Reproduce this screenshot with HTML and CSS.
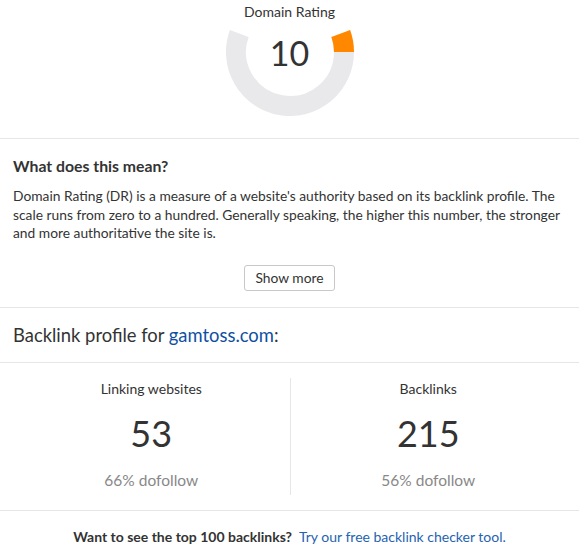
FILE: index.html
```html
<!DOCTYPE html>
<html>
<head>
<meta charset="utf-8">
<link rel="stylesheet" href="styles.css">
</head>
<body>
<section class="rating">
  <div class="rating-label">Domain Rating</div>
  <div class="gauge">
    <svg class="gauge-svg" width="128" height="128" viewBox="0 0 128 128">
      <path d="M13.26 45.53 A54 54 0 1 0 118 64" fill="none" stroke="#e9e9ec" stroke-width="20"/>
      <path d="M118 64 A54 54 0 0 0 114.74 45.53" fill="none" stroke="#ff8800" stroke-width="20"/>
    </svg>
    <div class="gauge-value">10</div>
  </div>
</section>
<section class="meaning">
  <h2 class="meaning-title">What does this mean?</h2>
  <p class="meaning-text">Domain Rating (DR) is a measure of a website's authority based on its backlink profile. The scale runs from zero to a hundred. Generally speaking, the higher this number, the stronger and more authoritative the site is.</p>
  <div class="more-row"><button class="more-btn">Show more</button></div>
</section>
<section class="profile">
  <h2 class="profile-title">Backlink profile for <a class="domain" href="#">gamtoss.com</a>:</h2>
</section>
<section class="stats">
  <div class="stat">
    <div class="stat-label">Linking websites</div>
    <div class="stat-value">53</div>
    <div class="stat-sub">66% dofollow</div>
  </div>
  <div class="stat stat-right">
    <div class="stat-label">Backlinks</div>
    <div class="stat-value">215</div>
    <div class="stat-sub">56% dofollow</div>
  </div>
</section>
<section class="cta">
  <span class="cta-q">Want to see the top 100 backlinks?</span>
  <a class="cta-link" href="#">Try our free backlink checker tool.</a>
</section>
</body>
</html>
```
FILE: styles.css
```css
* { box-sizing: border-box; }
html, body { margin: 0; padding: 0; background: #fff; }
body {
  font-family: Lato, "Liberation Sans", sans-serif;
  color: #333;
  width: 579px;
}
.rating {
  display: flex;
  flex-direction: column;
  align-items: center;
  height: 139px;
  border-bottom: 1px solid #e6e6e6;
}
.rating-label {
  font-size: 14px;
  line-height: 18px;
  margin-top: 3px;
  color: #333;
}
.gauge {
  position: relative;
  width: 128px;
  height: 98px;
  overflow: hidden;
  margin-top: -3px;
}
.gauge-svg {
  position: absolute;
  left: 0;
  top: -30px;
}
.gauge-value {
  position: absolute;
  left: 0;
  right: 0;
  top: 15px;
  text-align: center;
  font-size: 34px;
  line-height: 40px;
  font-weight: 400;
  color: #333;
}
.meaning {
  padding: 17px 13px 16px;
  border-bottom: 1px solid #e6e6e6;
}
.meaning-title {
  margin: 0;
  font-size: 15.8px;
  line-height: 20px;
  font-weight: 700;
  color: #333;
}
.meaning-text {
  margin: 11px 0 0;
  font-size: 13.8px;
  line-height: 18.5px;
  color: #333;
}
.more-row {
  display: flex;
  justify-content: center;
  margin-top: 22px;
}
.more-btn {
  font-family: Lato, "Liberation Sans", sans-serif;
  font-size: 13.8px;
  color: #333;
  background: #fff;
  border: 1px solid #c8c8c8;
  border-radius: 3px;
  width: 91px;
  height: 26px;
  padding: 0;
}
.profile {
  padding: 14px 13px 14px;
  border-bottom: 1px solid #e6e6e6;
}
.profile-title {
  margin: 0;
  font-size: 18.4px;
  line-height: 26px;
  font-weight: 400;
  color: #333;
}
.domain {
  color: #0f4fa3;
  text-decoration: none;
}
.stats {
  display: grid;
  grid-template-columns: 1fr 1fr;
  padding: 15px 13px 15px;
  border-bottom: 1px solid #e6e6e6;
}
.stat {
  display: flex;
  flex-direction: column;
  align-items: center;
  height: 117px;
}
.stat-right {
  border-left: 1px solid #e6e6e6;
}
.stat-label {
  font-size: 14px;
  line-height: 20px;
  margin-top: 1px;
}
.stat-value {
  font-size: 36px;
  line-height: 44px;
  margin-top: 12px;
  color: #333;
}
.stat-sub {
  font-size: 15.5px;
  line-height: 20px;
  margin-top: 15px;
  color: #888;
}
.cta {
  display: flex;
  justify-content: center;
  gap: 7px;
  padding: 17px 13px;
  font-size: 14px;
  line-height: 18px;
}
.cta-q {
  font-weight: 700;
  color: #333;
}
.cta-link {
  color: #2563b0;
  text-decoration: none;
}
```
